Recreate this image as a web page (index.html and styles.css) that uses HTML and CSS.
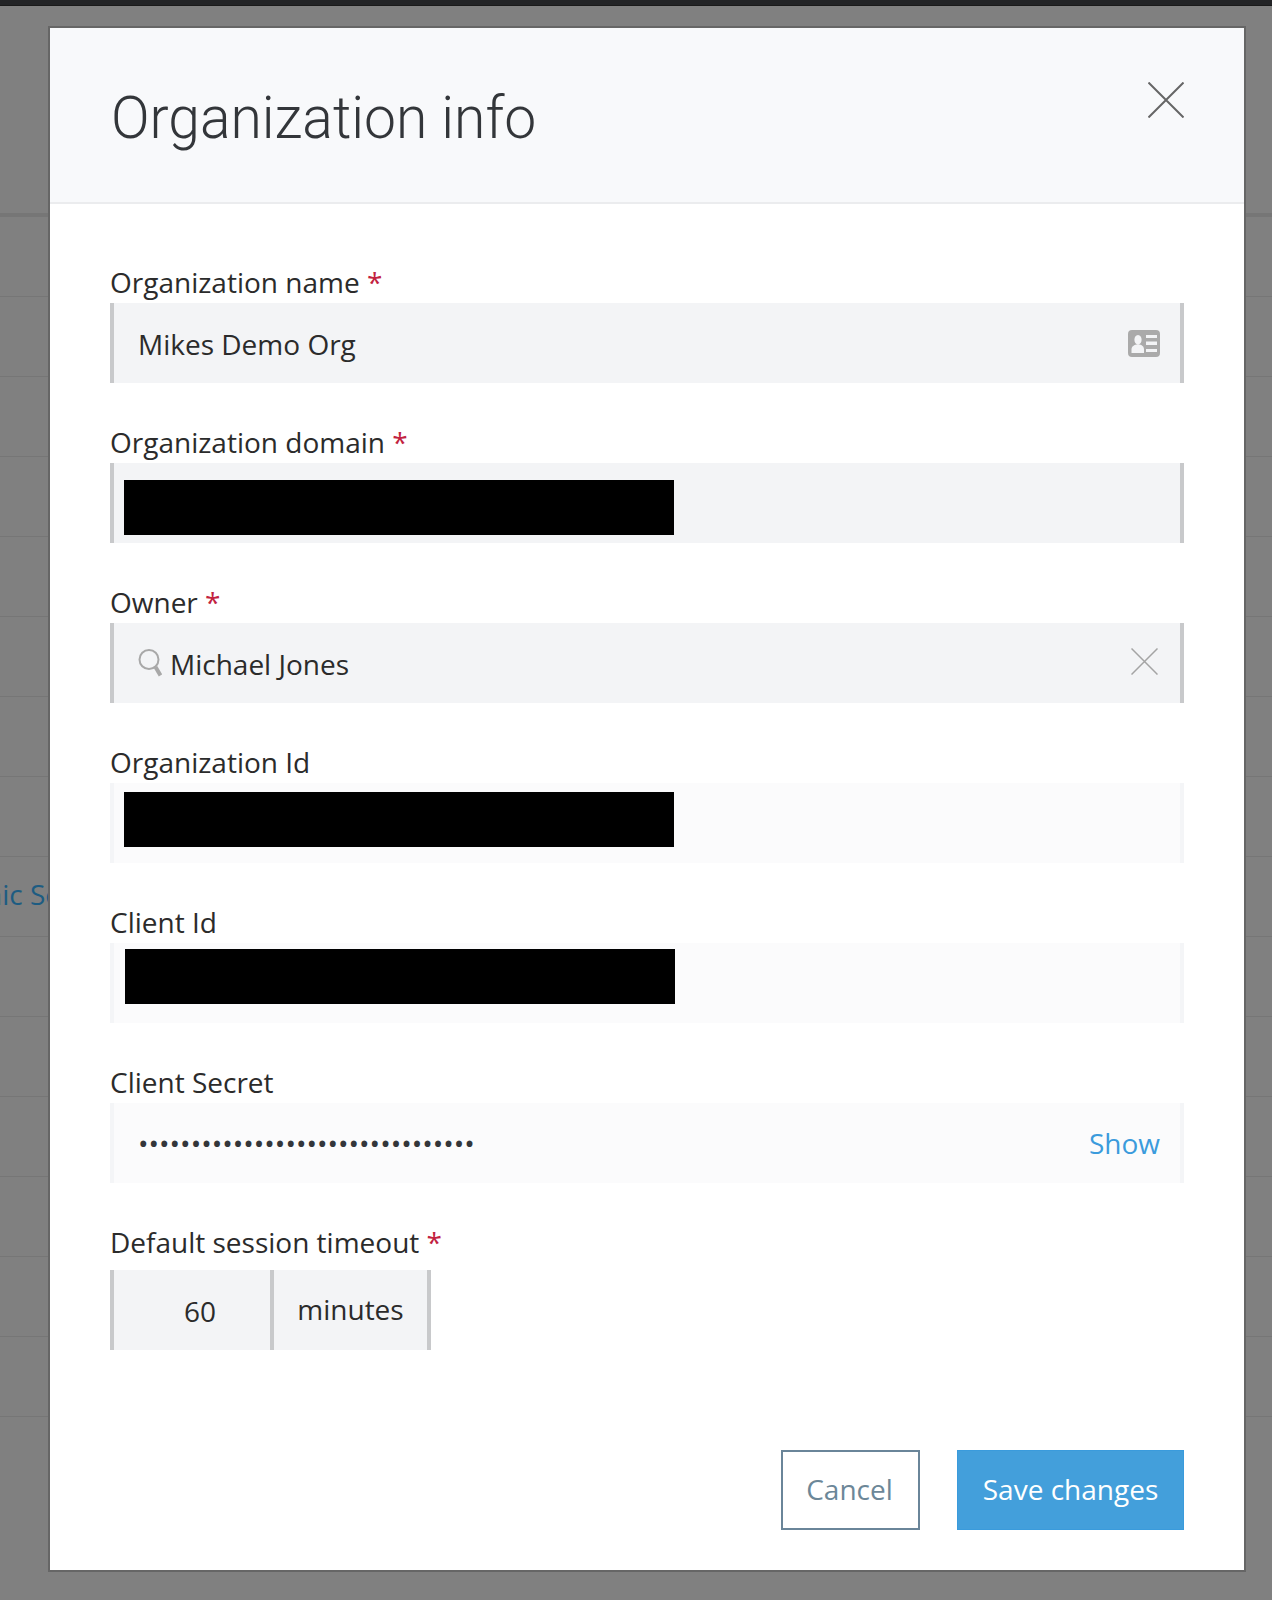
FILE: index.html
```html
<!DOCTYPE html>
<html lang="en">
<head>
    <meta charset="UTF-8">
    <meta name="viewport" content="width=device-width, initial-scale=1.0">
    <title>Organization info</title>
    <link rel="stylesheet" href="styles.css">
</head>
<body>
    <div class="topbar"></div>
    <div class="rows">
        <div class="row"></div>
        <div class="row"></div>
        <div class="row"></div>
        <div class="row"></div>
        <div class="row"></div>
        <div class="row"></div>
        <div class="row"></div>
        <div class="row"></div>
        <div class="row row-link"><span>nic Sc</span></div>
        <div class="row"></div>
        <div class="row"></div>
        <div class="row"></div>
        <div class="row"></div>
        <div class="row"></div>
        <div class="row"></div>
    </div>

    <div class="modal">
        <div class="modal-header">
            <h1 class="modal-title">Organization info</h1>
            <svg class="close-icon" viewBox="0 0 36 36">
                <path d="M0.5 0.5L35.5 35.5M35.5 0.5L0.5 35.5"/>
            </svg>
        </div>

        <div class="modal-body">
            <div class="group">
                <label class="label">Organization name <span class="req">*</span></label>
                <div class="field">
                    <span class="value">Mikes Demo Org</span>
                    <svg class="card-icon" viewBox="0 0 32 27">
                        <path fill-rule="evenodd" d="M4 0H28A4 4 0 0 1 32 4V23A4 4 0 0 1 28 27H4A4 4 0 0 1 0 23V4A4 4 0 0 1 4 0ZM10 5A4.200 4.800 0 0 0 10 14.500A4.200 4.800 0 0 0 10 5ZM10 14.500C6 14.500 3.500 16.500 3.500 19.500V23H16V19.500C16 16.500 14 14.500 10 14.500ZM18 5V8H29V5ZM18 11.500V15H29V11.500ZM18 19V22H29V19Z"/>
                    </svg>
                </div>
            </div>

            <div class="group">
                <label class="label">Organization domain <span class="req">*</span></label>
                <div class="field field-redacted">
                    <div class="redacted"></div>
                </div>
            </div>

            <div class="group">
                <label class="label">Owner <span class="req">*</span></label>
                <div class="field">
                    <svg class="search-icon" viewBox="0 0 24 28">
                        <circle cx="11" cy="10.500" r="9.500"/>
                        <path class="search-handle" d="M17.500 18L22.500 26.500"/>
                    </svg>
                    <span class="value">Michael Jones</span>
                    <svg class="clear-icon" viewBox="0 0 27 27">
                        <path d="M0.500 0.500L26.500 26.500M26.500 0.500L0.500 26.500"/>
                    </svg>
                </div>
            </div>

            <div class="group">
                <label class="label">Organization Id</label>
                <div class="field field-disabled field-redacted">
                    <div class="redacted redacted-org"></div>
                </div>
            </div>

            <div class="group">
                <label class="label">Client Id</label>
                <div class="field field-disabled field-redacted">
                    <div class="redacted redacted-client"></div>
                </div>
            </div>

            <div class="group">
                <label class="label">Client Secret</label>
                <div class="field field-disabled field-secret">
                    <span class="value secret">••••••••••••••••••••••••••••••••</span>
                    <a class="show-link">Show</a>
                </div>
            </div>

            <div class="group">
                <label class="label label-timeout">Default session timeout <span class="req">*</span></label>
                <div class="timeout">
                    <div class="timeout-value">60</div>
                    <div class="timeout-unit">minutes</div>
                </div>
            </div>
        </div>

        <div class="modal-footer">
            <button class="btn btn-cancel">Cancel</button>
            <button class="btn btn-save">Save changes</button>
        </div>
    </div>
</body>
</html>
```

FILE: styles.css
```css
html, body{
    height: 100%;
}
body{
    margin: 0;
    background: #808080;
    font-family: 'Open Sans', 'Noto Sans', sans-serif;
    color: #2b2b2b;
    overflow: hidden;
}

.topbar{
    height: 5px;
    background: #232426;
    border-bottom: 1px solid #1a1a1a;
}

.rows{
    margin-top: 207px;
    border-top: 4px solid #767676;
}
.row{
    height: 79px;
    border-bottom: 1px solid #767676;
}
.row-link{
    display: flex;
    align-items: center;
    box-sizing: border-box;
    height: 80px;
    padding-bottom: 6px;
    font-size: 28px;
    color: #1d5c82;
    white-space: nowrap;
}
.row-link span{
    margin-left: -15px;
}

.modal{
    position: absolute;
    left: 50px;
    top: 28px;
    width: 1194px;
    height: 1542px;
    background: #ffffff;
    box-shadow: 0 0 0 2px #666666;
    display: flex;
    flex-direction: column;
}

.modal-header{
    height: 176px;
    box-sizing: border-box;
    padding: 54px 60px 0 61px;
    background: #f8f9fb;
    border-bottom: 2px solid #ebecee;
    display: flex;
    justify-content: space-between;
    align-items: flex-start;
    flex-shrink: 0;
}
.modal-title{
    margin: 1px 0 0;
    font-family: 'Roboto', sans-serif;
    font-weight: 300;
    font-size: 60px;
    line-height: 70px;
    color: #33363a;
    transform: scaleX(0.95);
    transform-origin: left center;
    white-space: nowrap;
}
.close-icon{
    width: 36px;
    height: 36px;
    fill: none;
    stroke: #666666;
    stroke-width: 2;
}

.modal-body{
    flex: 1;
    padding: 59px 60px 0;
}

.group{
    margin-bottom: 40px;
}
.label{
    display: block;
    font-size: 28px;
    line-height: 38px;
    margin-bottom: 2px;
}
.label-timeout{
    margin-bottom: 9px;
}
.req{
    color: #c2223f;
}

.field{
    height: 80px;
    box-sizing: border-box;
    padding: 1px 20px 0 24px;
    background: #f3f4f6;
    border-left: 4px solid #c8c9cb;
    border-right: 4px solid #c8c9cb;
    display: flex;
    align-items: center;
    font-size: 28px;
}
.field-disabled{
    background: #fbfbfc;
    border-left-color: #f4f5f7;
    border-right-color: #f4f5f7;
}
.field-redacted{
    padding: 17px 0 0 10px;
    align-items: flex-start;
}
.field-secret{
    padding-top: 0;
    padding-bottom: 1px;
}
.redacted{
    width: 550px;
    height: 55px;
    background: #000000;
}
.redacted-org{
    margin-top: -8px;
}
.redacted-client{
    margin-left: 1px;
    margin-top: -11px;
}

.value{
    flex: 1;
}
.secret{
    color: #33363a;
}
.show-link{
    color: #3b9bdc;
}

.card-icon{
    width: 32px;
    height: 27px;
    fill: #aaaaaa;
}
.search-icon{
    width: 24px;
    height: 28px;
    margin-right: 8px;
    margin-top: -1px;
    fill: none;
    stroke: #a8a8a8;
    stroke-width: 2;
}
.search-handle{
    stroke-width: 4;
}
.clear-icon{
    width: 27px;
    height: 27px;
    margin: -5px 2px 0 0;
    fill: none;
    stroke: #a4a4a4;
    stroke-width: 1.500;
}

.timeout{
    display: flex;
    width: 321px;
    height: 80px;
    font-size: 28px;
}
.timeout-value, .timeout-unit{
    box-sizing: border-box;
    background: #f3f4f6;
    border-left: 4px solid #c8c9cb;
    display: flex;
    align-items: center;
    justify-content: center;
}
.timeout-value{
    width: 160px;
    padding: 2px 0 0 16px;
}
.timeout-unit{
    flex: 1;
    border-right: 4px solid #c8c9cb;
    padding-bottom: 2px;
}

.modal-footer{
    display: flex;
    justify-content: flex-end;
    gap: 37px;
    padding: 0 60px 40px;
}
.btn{
    height: 80px;
    box-sizing: border-box;
    font-family: inherit;
    font-size: 28px;
    padding: 0 0 2px;
}
.btn-cancel{
    width: 139px;
    background: #ffffff;
    border: 2px solid #6a8599;
    color: #6c8798;
    padding-right: 2px;
}
.btn-save{
    width: 227px;
    background: #439fdb;
    border: 1px solid #3a9bdc;
    color: #ffffff;
}
```
